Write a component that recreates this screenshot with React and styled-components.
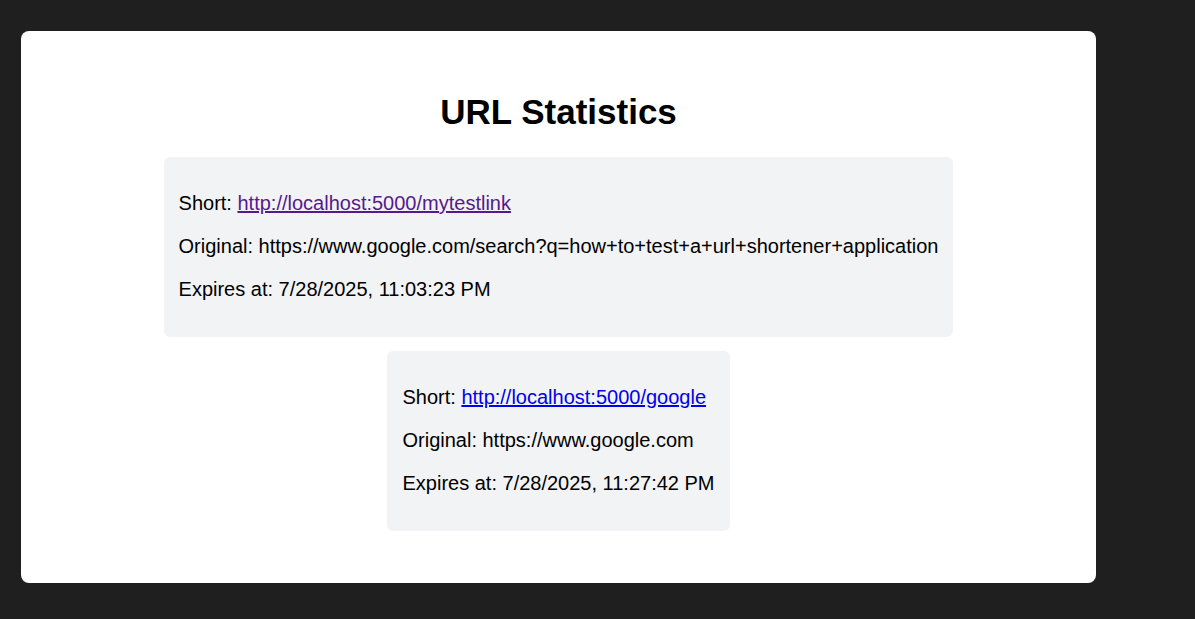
import React from "react";
import styled, { createGlobalStyle } from "styled-components";

const GlobalStyle = createGlobalStyle`
  html, body {
    margin: 0;
    background: #1f1f1f;
    font-family: "Liberation Sans", Arial, sans-serif;
  }
`;

const urls = [
  {
    id: 1,
    short: "http://localhost:5000/mytestlink",
    original: "https://www.google.com/search?q=how+to+test+a+url+shortener+application",
    expires: "7/28/2025, 11:03:23 PM",
    visited: true,
  },
  {
    id: 2,
    short: "http://localhost:5000/google",
    original: "https://www.google.com",
    expires: "7/28/2025, 11:27:42 PM",
    visited: false,
  },
];

const Stats = () => {
  return (
    <Page>
      <GlobalStyle />
      <Panel>
        <Title>URL Statistics</Title>
        {urls.map((url) => {
          return (
            <Card key={url.id}>
              <Line>
                Short:{" "}
                <ShortLink href="#" $visited={url.visited}>
                  {url.short}
                </ShortLink>
              </Line>
              <Line>Original: {url.original}</Line>
              <Line>Expires at: {url.expires}</Line>
            </Card>
          );
        })}
      </Panel>
    </Page>
  );
};

const Page = styled.div`
  min-height: 619px;
  box-sizing: border-box;
  padding: 31px 0 0 21px;
`;

const Panel = styled.section`
  width: 1075px;
  box-sizing: border-box;
  background: #fff;
  border-radius: 8px;
  padding: 37px 20px 38px;
  display: flow-root;
`;

const Title = styled.h1`
  margin: 23.5px 0 25.5px;
  font-size: 35px;
  font-weight: bold;
  text-align: center;
  color: #000;
`;

const Card = styled.div`
  width: fit-content;
  margin: 0 auto 14px;
  padding: 15px 15px 16px;
  background: #f2f3f5;
  border-radius: 6px;
  display: flow-root;
`;

const Line = styled.p`
  margin: 20px 0;
  font-size: 20px;
  color: #000;
`;

const ShortLink = styled.a`
  color: ${(p) => (p.$visited ? "#551a8b" : "#0000ee")};
  text-decoration: underline;
`;

export default Stats;
